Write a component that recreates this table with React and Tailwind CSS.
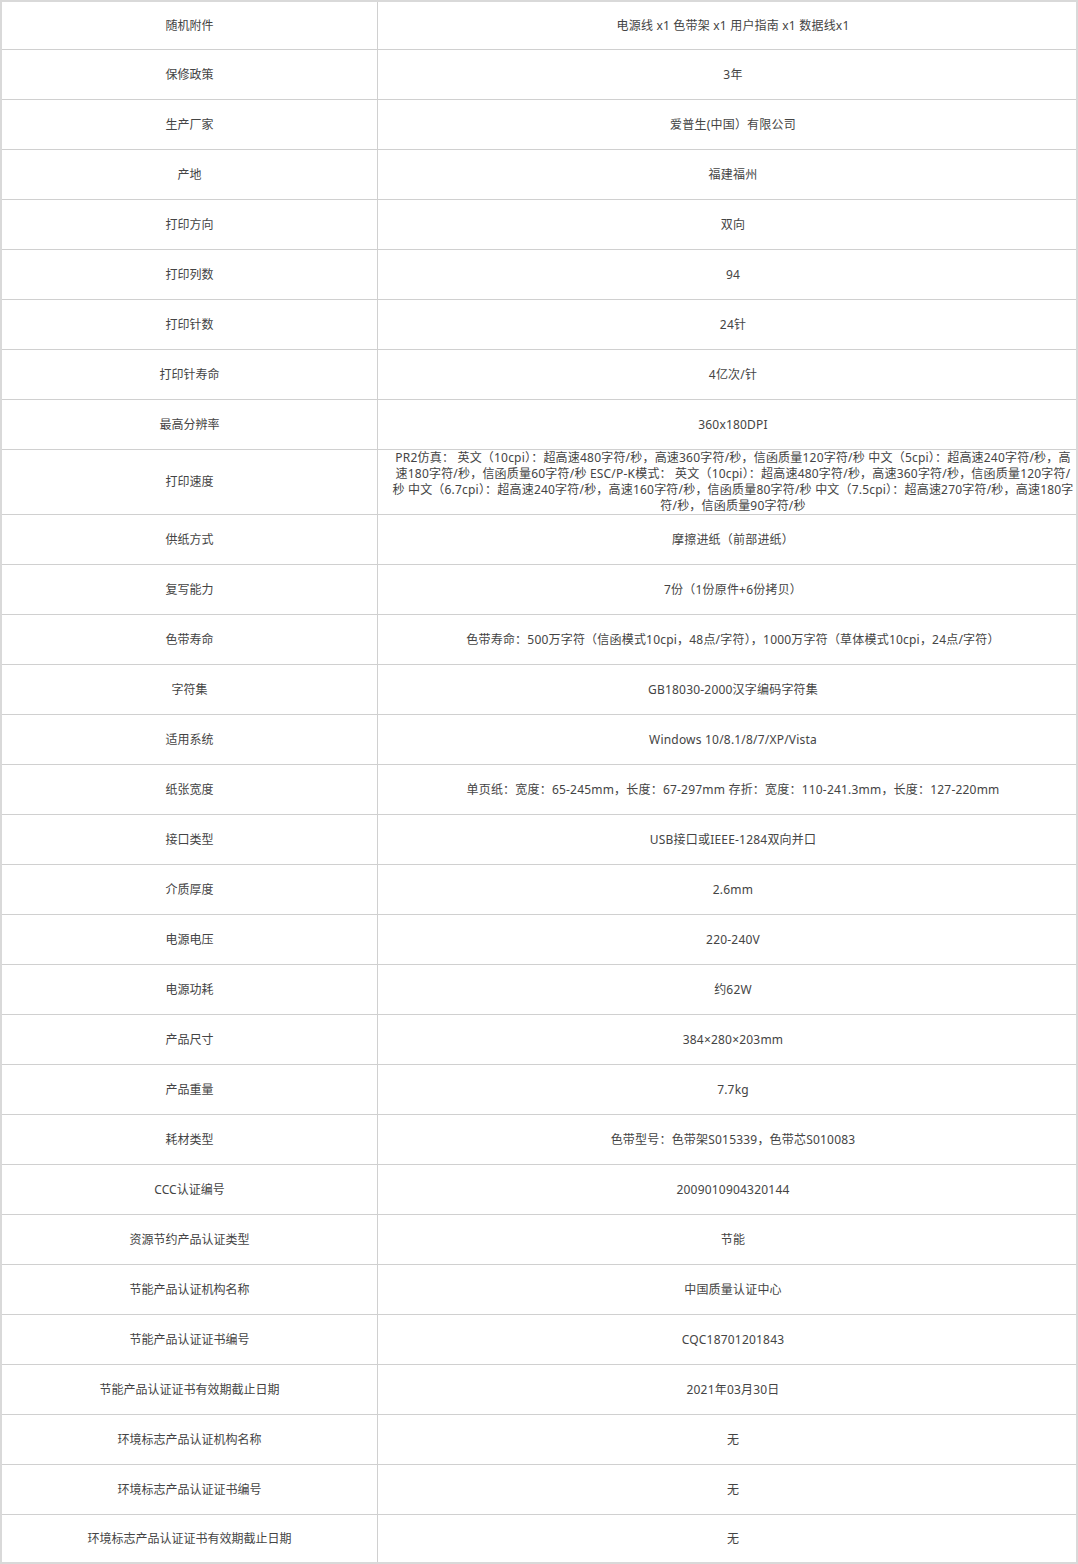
const specs = [
  ['随机附件', '电源线 x1 色带架 x1 用户指南 x1 数据线x1'],
  ['保修政策', '3年'],
  ['生产厂家', '爱普生(中国）有限公司'],
  ['产地', '福建福州'],
  ['打印方向', '双向'],
  ['打印列数', '94'],
  ['打印针数', '24针'],
  ['打印针寿命', '4亿次/针'],
  ['最高分辨率', '360x180DPI'],
  [
    '打印速度',
    'PR2仿真： 英文（10cpi）：超高速480字符/秒，高速360字符/秒，信函质量120字符/秒 中文（5cpi）：超高速240字符/秒，高速180字符/秒，信函质量60字符/秒 ESC/P-K模式： 英文（10cpi）：超高速480字符/秒，高速360字符/秒，信函质量120字符/秒 中文（6.7cpi）：超高速240字符/秒，高速160字符/秒，信函质量80字符/秒 中文（7.5cpi）：超高速270字符/秒，高速180字符/秒，信函质量90字符/秒',
  ],
  ['供纸方式', '摩擦进纸（前部进纸）'],
  ['复写能力', '7份（1份原件+6份拷贝）'],
  ['色带寿命', '色带寿命：500万字符（信函模式10cpi，48点/字符），1000万字符（草体模式10cpi，24点/字符）'],
  ['字符集', 'GB18030-2000汉字编码字符集'],
  ['适用系统', 'Windows 10/8.1/8/7/XP/Vista'],
  ['纸张宽度', '单页纸：宽度：65-245mm，长度：67-297mm 存折：宽度：110-241.3mm，长度：127-220mm'],
  ['接口类型', 'USB接口或IEEE-1284双向并口'],
  ['介质厚度', '2.6mm'],
  ['电源电压', '220-240V'],
  ['电源功耗', '约62W'],
  ['产品尺寸', '384×280×203mm'],
  ['产品重量', '7.7kg'],
  ['耗材类型', '色带型号：色带架S015339，色带芯S010083'],
  ['CCC认证编号', '2009010904320144'],
  ['资源节约产品认证类型', '节能'],
  ['节能产品认证机构名称', '中国质量认证中心'],
  ['节能产品认证证书编号', 'CQC18701201843'],
  ['节能产品认证证书有效期截止日期', '2021年03月30日'],
  ['环境标志产品认证机构名称', '无'],
  ['环境标志产品认证证书编号', '无'],
  ['环境标志产品认证证书有效期截止日期', '无'],
]

// rows are 49px of content plus a 1px rule; first and last sit against the thicker frame
function rowClass(i, last) {
  if (i === 0) return 'min-h-[48px] border-b border-[#d0d0d0]'
  if (i === last) return 'min-h-[47px]'
  return 'min-h-[50px] border-b border-[#d0d0d0]'
}

export default function App() {
  const last = specs.length - 1
  return (
    <div
      className="w-[1078px] bg-white text-[12px] leading-[16px] text-[#444]"
      style={{ fontFamily: '"Noto Sans", "Noto Sans CJK SC", sans-serif' }}
    >
      <div className="border-2 border-[#d9d9d9]">
        {specs.map(([label, value], i) => (
          <div key={label} className={'grid grid-cols-[376px_1fr] ' + rowClass(i, last)}>
            <div className="flex items-center justify-center border-r border-[#d0d0d0] text-center">
              {label}
            </div>
            <div className="flex items-center justify-center pl-[12px] text-center tracking-[0.2px]">
              {value}
            </div>
          </div>
        ))}
      </div>
    </div>
  )
}
